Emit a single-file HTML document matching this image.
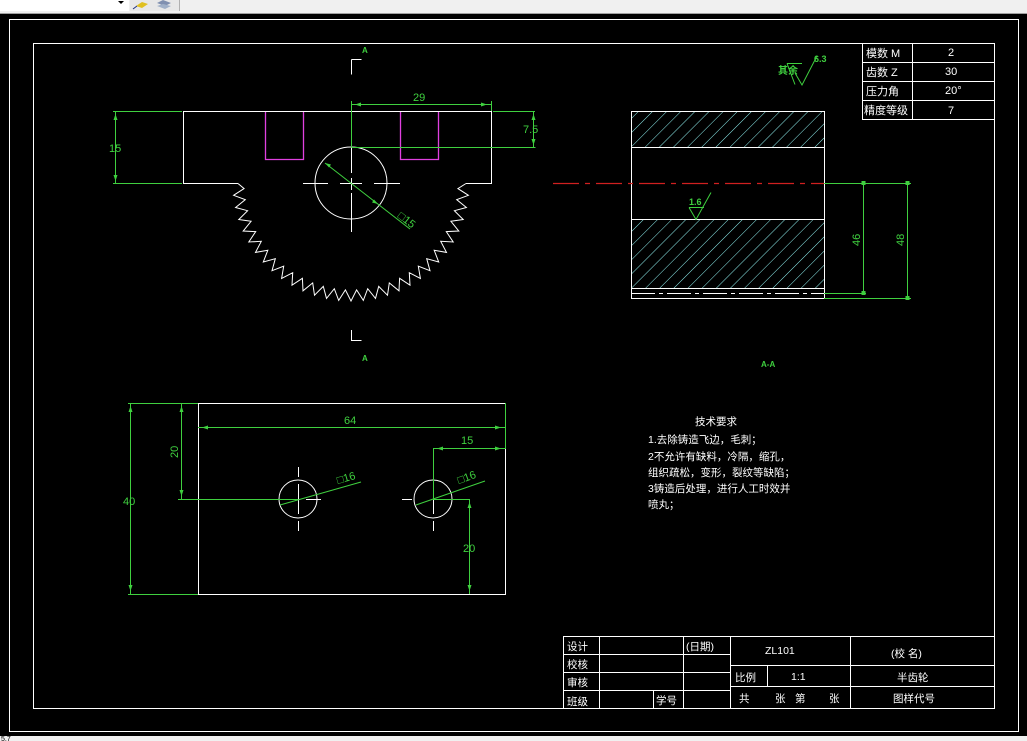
<!DOCTYPE html>
<html><head><meta charset="utf-8"><style>
html,body{margin:0;padding:0;width:1027px;height:741px;overflow:hidden;background:#000}
svg{display:block}
text{font-family:"Liberation Sans","Noto Sans CJK SC",sans-serif}
</style></head><body>
<svg id="s" width="1027" height="741" viewBox="0 0 1027 741" xmlns="http://www.w3.org/2000/svg">
<defs>
<pattern id="h" width="10" height="10" patternUnits="userSpaceOnUse" patternTransform="rotate(45)">
<line x1="0" y1="0" x2="0" y2="10" stroke="#8ff0f0" stroke-width="1"/>
</pattern>
</defs>
<rect x="0" y="0" width="1027" height="741" fill="#000"/>
<rect x="0" y="0" width="1027" height="13" fill="#f0f0f0"/>
<rect x="0" y="13" width="1027" height="1" fill="#a0a0a0"/>
<rect x="0" y="0" width="129" height="11" fill="#fff"/>
<path d="M118 1 l6 0 l-3 3z" fill="#000"/>
<rect x="130" y="0" width="50" height="11" fill="#e8e8e8"/>
<rect x="179" y="0" width="1" height="11" fill="#b0b0b0"/>
<path d="M136 6 l6 -4 l6 2 l-6 4z" fill="#e0c020"/>
<path d="M133 9 l4 -3" stroke="#203080" stroke-width="1"/>
<path d="M157 3 l6 -3 l8 3 l-6 3z" fill="#8090b0"/>
<path d="M157 6 l6 -2 l8 2 l-6 3z" fill="#a0b0c8"/>
<rect x="0" y="736" width="1027" height="5" fill="#f0f0f0"/>
<text x="1" y="741" font-size="7" fill="#000">5.7</text>

<g fill="none" stroke="#fff" stroke-width="1">
<rect x="9.5" y="19.5" width="1009" height="712"/>
<rect x="33.5" y="43.5" width="961" height="665"/>
</g>

<g fill="none" stroke="#fff" stroke-width="1">
<path d="M238 183.5 H183.5 V111.5 H491.5 V183.5 H466"/>
<path id="gear" d=""/>
<circle cx="351" cy="183" r="36"/>
<path d="M303 183.5h25 M340 183.5h22 M374 183.5h26 M351.5 146v27 M351.5 178v12 M351.5 193v39"/>
<path d="M351.5 59.5h10 M351.5 59.5v15 M351.5 330v10.5h10"/>
</g>
<g fill="none" stroke="#e040e0" stroke-width="1.3">
<path d="M265.5 112v47.5h38V112 M400.5 112v47.5h38V112"/>
</g>
<g fill="none" stroke="#3fd03f" stroke-width="1">
<path d="M351.5 101v46.5 M351.5 104.5h140 M491.5 101v10 M351.5 147.5h184 M493 111.5h42 M533.5 111v36"/>
<path d="M113 111.5h69 M113 183.5h69 M115.5 111v72"/>
<path d="M325 163 L410 229"/>
</g>
<g fill="#3fd03f">
<path d="M355 104.5l6-2v4z M487 104.5l-6-2v4z M533.5 114l-2 6h4z M533.5 145l-2-6h4z M115.5 114l-2 6h4z M115.5 181l-2-6h4z"/>
<path d="M325 163l6 1.5-2 3z M378 204l-6-1.5 2-3z"/>
</g>
<g fill="#3fd03f" font-size="11">
<text x="413" y="101">29</text>
<text x="523" y="133">7.5</text>
<text x="109" y="152">15</text>
<text x="0" y="0" transform="translate(397,217) rotate(38)">□15</text>
<text x="362" y="53" font-size="8" font-weight="bold">A</text>
<text x="362" y="361" font-size="8" font-weight="bold">A</text>
<text x="761" y="367" font-size="8" font-weight="bold">A-A</text>
</g>

<rect x="631" y="111" width="193" height="36" fill="url(#h)"/>
<rect x="631" y="219" width="193" height="69" fill="url(#h)"/>
<g fill="none" stroke="#fff" stroke-width="1">
<rect x="631.5" y="111.5" width="193" height="187"/>
<path d="M631 147.5h193 M631 219.5h193 M631 288.5h193"/>
<path d="M631 293.5h193" stroke-dasharray="24 4 4 4"/>
</g>
<path d="M553 183.5h271" stroke="#d02020" stroke-width="1.3" stroke-dasharray="26 6 5 6"/>
<g fill="none" stroke="#3fd03f" stroke-width="1">
<path d="M824 183.5h87 M824 293.5h42 M824 298.5h87 M863.5 183v110 M907.5 183v115"/>
<path d="M689 207.5h15 M689 207.5l7 12 l15-27"/>
<path d="M787 63.5h15 M795 73l7 12 l15-29 M787 63.5l8 21"/>
</g>
<g fill="#3fd03f">
<rect x="861.5" y="181" width="4" height="4"/><rect x="861.5" y="291" width="4" height="4"/>
<rect x="905.5" y="181" width="4" height="4"/><rect x="905.5" y="296" width="4" height="4"/>
</g>
<g fill="#3fd03f" font-size="11">
<text transform="translate(860,246) rotate(-90)">46</text>
<text transform="translate(904,246) rotate(-90)">48</text>
<text x="689" y="205" font-size="9" font-weight="bold">1.6</text>
<text x="814" y="62" font-size="9" font-weight="bold">6.3</text>
<text x="778" y="74" font-size="10" font-weight="bold">其余</text>
</g>

<g fill="none" stroke="#fff" stroke-width="1">
<rect x="862.5" y="43.5" width="132" height="76"/>
<path d="M862 62.5h132 M862 81.5h132 M862 100.5h132 M912.5 43v76"/>
</g>
<g fill="#fff" font-size="11">
<text x="866" y="57">模数 M</text><text x="948" y="56">2</text>
<text x="866" y="76">齿数 Z</text><text x="945" y="75">30</text>
<text x="866" y="95">压力角</text><text x="945" y="94">20°</text>
<text x="864" y="114">精度等级</text><text x="948" y="114">7</text>
</g>

<g fill="none" stroke="#fff" stroke-width="1">
<rect x="198.5" y="403.5" width="307" height="191"/>
<circle cx="298" cy="499" r="19"/>
<circle cx="433" cy="499" r="19"/>
<path d="M298.5 467v10 M298.5 484v30 M298.5 521v10 M281 499.5h19 M306 499.5h15"/>
<path d="M433.5 484v30 M433.5 521v10 M402 499.5h10"/>
</g>
<g fill="none" stroke="#3fd03f" stroke-width="1">
<path d="M198 427.5h307 M505.5 403v46 M433.5 448.5h72 M433.5 448v51"/>
<path d="M128 403.5h70 M128 594.5h70 M130.5 403v191 M181.5 403v96 M178 499.5h120 M433 499.5h37 M469.5 499v95"/>
<path d="M280 505 L361 482 M416 505 L485 481"/>
</g>
<g fill="#3fd03f">
<path d="M202 427.5l6-2v4z M501 427.5l-6-2v4z M437 448.5l6-2v4z M501 448.5l-6-2v4z"/>
<path d="M130.5 406l-2 6h4z M130.5 591l-2-6h4z M181.5 406l-2 6h4z M181.5 496l-2-6h4z M469.5 502l-2 6h4z M469.5 591l-2-6h4z"/>
</g>
<g fill="#3fd03f" font-size="11">
<text x="344" y="424">64</text>
<text x="461" y="444">15</text>
<text transform="translate(178,458) rotate(-90)">20</text>
<text x="123" y="505">40</text>
<text x="463" y="552">20</text>
<text transform="translate(338,484) rotate(-16)">□16</text>
<text transform="translate(459,484) rotate(-20)">□16</text>
</g>

<g fill="#fff" font-size="10.5" font-family="'Noto Sans CJK SC',sans-serif">
<text x="695" y="425">技术要求</text>
<text x="648" y="443">1.去除铸造飞边，毛刺；</text>
<text x="648" y="460">2不允许有缺料，冷隔，缩孔，</text>
<text x="648" y="476">组织疏松，变形，裂纹等缺陷；</text>
<text x="648" y="492">3铸造后处理，进行人工时效并</text>
<text x="648" y="508">喷丸；</text>
</g>

<g fill="none" stroke="#fff" stroke-width="1">
<rect x="563.5" y="636.5" width="431" height="72"/>
<path d="M563 654.5h167 M563 672.5h167 M563 690.5h167"/>
<path d="M599.5 636v72 M653.5 690v18 M683.5 636v72 M730.5 636v72 M850.5 636v72 M767.5 665v21"/>
<path d="M730 665.5h264 M730 686.5h264"/>
</g>
<g fill="#fff" font-size="10.5" font-family="'Noto Sans CJK SC',sans-serif">
<text x="567" y="650">设计</text>
<text x="567" y="668">校核</text>
<text x="567" y="686">审核</text>
<text x="567" y="705">班级</text>
<text x="656" y="704">学号</text>
<text x="686" y="650">(日期)</text>
<text x="765" y="654" font-family="'Liberation Sans',sans-serif">ZL101</text>
<text x="735" y="681">比例</text>
<text x="791" y="680" font-family="'Liberation Sans',sans-serif">1:1</text>
<text x="739" y="702">共</text><text x="775" y="702">张</text><text x="795" y="702">第</text><text x="829" y="702">张</text>
<text x="891" y="657">(校 名)</text>
<text x="897" y="681">半齿轮</text>
<text x="893" y="702">图样代号</text>
</g>
</svg>
<script>
(function(){
var cx=351,cy=183,ro=118,ri=107,n=30;
var pts=[];
for(var i=0;i<=n*2;i++){
 var r=(i%2===0)?ro:ri;
 var ang=Math.PI - (i/(n*2))*Math.PI;
 var x=cx+r*Math.cos(ang), y=cy+r*Math.sin(ang);
 pts.push(x.toFixed(1)+" "+y.toFixed(1));
}
var d="M238 183.5 L"+pts.slice(1,pts.length-1).join(" L")+" L466 183.5";
document.getElementById("gear").setAttribute("d",d);
})();
</script>
</body></html>
